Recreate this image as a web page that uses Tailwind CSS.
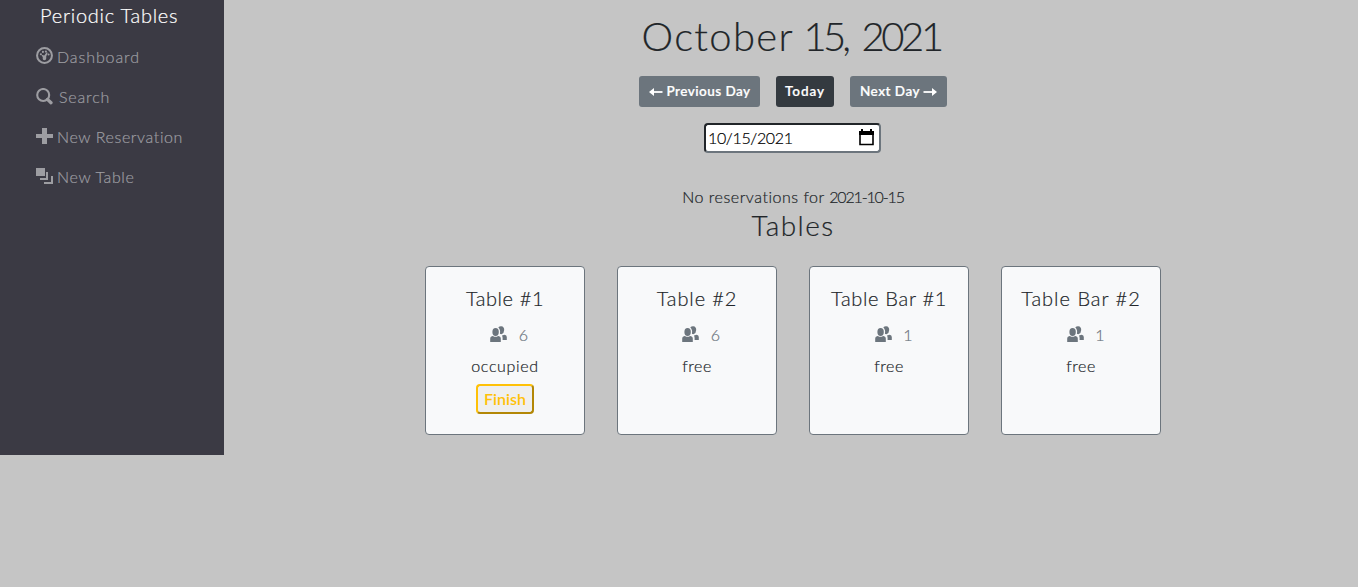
<!DOCTYPE html>
<html lang="en">
<head>
<meta charset="utf-8">
<title>Periodic Tables</title>
<script src="https://cdn.jsdelivr.net/npm/@tailwindcss/browser@4"></script>
</head>
<body class="flex h-[587px] items-start overflow-hidden bg-[#c5c5c5] font-['Lato',sans-serif] text-base font-light text-[#212529] [-webkit-text-stroke:0.2px]">
<svg class="hidden">
  <symbol id="people" viewBox="0 0 17 16">
    <ellipse cx="5.600" cy="6" rx="3.200" ry="4"/>
    <path d="M.2 16v-3.600q0-1.500 1.700-2.100l1-.3q2.600 1.700 5.200 0l1 .3q1.700.5 1.700 2.100V16zM8.300 1.200Q9.700 0 11.300.2q3 .3 2.900 3.900-.1 3-2.400 4-1.300.2-1.900-.4.900-3.800-1.600-6.500zM12 9.600l2.600-.9q2.200.5 2.200 2.300v3h-4.200v-2q0-1.200-.6-2.400z"/>
  </symbol>
</svg>
<nav class="h-[455px] w-56 shrink-0 bg-[#3b3a44] pl-9 text-[#9d9da2]">
  <div class="flex h-[37px] pl-1 text-xl leading-[30px] text-white"><span class="tracking-[0.75px]">Periodic Tables</span></div>
  <a class="flex h-10 items-center gap-1">
    <svg class="mb-[3px] h-[17px] w-[17px]" viewBox="0 0 16 16" fill="currentColor"><circle cx="8" cy="8" r="7" fill="none" stroke="currentColor" stroke-width="1.900"/><circle cx="4.600" cy="6.800" r="1"/><circle cx="6.500" cy="4.600" r="1"/><circle cx="9.300" cy="4.300" r="1"/><circle cx="11.800" cy="7" r="1"/><path d="M5 7.200l2.800.8 2.200-3 1 .5-1.400 3.500q.5 3.300-1.700 3.500-2-.2-1.500-2.900z"/></svg>
    <span class="tracking-[0.9px]">Dashboard</span></a>
  <a class="flex h-10 items-center gap-[6px]">
    <svg class="mb-[2px] h-[17px] w-[17px]" viewBox="0 0 17 17" fill="none" stroke="currentColor"><circle cx="7.200" cy="7" r="6" stroke-width="2.100"/><path d="M11.500 11.400l3.500 3.300" stroke-width="3.300" stroke-linecap="round"/></svg>
    <span class="tracking-[0.85px]">Search</span></a>
  <a class="flex h-10 items-center gap-1">
    <svg class="mb-[2px] h-4 w-[17px]" viewBox="0 0 17 16" fill="currentColor"><path d="M6 0h5v6h6v4h-6v6H6v-6H0V6h6z"/></svg>
    <span class="tracking-[0.6px]">New Reservation</span></a>
  <a class="flex h-10 items-center gap-1">
    <svg class="mb-[2px] h-4 w-[17px]" viewBox="0 0 17 16" fill="currentColor"><path d="M0 0h9v8H0zM10 4h2v8H4v-2h6zM15 8h2v8H8v-2h7z"/></svg>
    <span class="tracking-[0.65px]">New Table</span></a>
</nav>
<main class="flex flex-1 flex-col items-center pl-1">
  <h1 class="mt-3 flex h-16 text-[40px] leading-[48px]"><span class="w-[162px] tracking-[1.3px]">October </span><span class="w-[58px] tracking-[-3.8px]">15, </span><span class="w-[83px] tracking-[-3.4px]">2021</span></h1>
  <div class="flex h-[31px] gap-4 text-[13.5px] font-semibold text-white">
    <button class="flex w-[121px] items-center justify-center gap-1 rounded-[3px] bg-[#6c757d]">
      <svg class="h-[10px] w-[14px]" viewBox="0 0 14 10"><path d="M13.500 5H3" stroke="currentColor" stroke-width="1.800"/><path d="M0 5l5-4v8z" fill="currentColor"/></svg><span class="tracking-[0.45px]">Previous Day</span></button>
    <button class="w-[58px] rounded-[3px] bg-[#343a40]"><span class="tracking-[0.9px]">Today</span></button>
    <button class="flex w-[97px] items-center justify-center gap-[3px] rounded-[3px] bg-[#6c757d]"><span class="tracking-[0.5px]">Next Day</span><svg class="h-[10px] w-[14px]" viewBox="0 0 14 10"><path d="M.5 5H11" stroke="currentColor" stroke-width="1.800"/><path d="M14 5L9 1v8z" fill="currentColor"/></svg></button>
  </div>
  <div class="mt-4 mr-px flex h-[30px] w-[177px] items-center justify-between rounded-[4px] border-2 border-t-[#212529] border-l-[#212529] border-r-[#6c757d] border-b-[#6c757d] bg-white pl-[2px] pr-[5px] text-black">
    <span class="tracking-[-0.35px]">10/15/2021</span>
    <svg class="mb-px h-[17px] w-[15px]" viewBox="0 0 15 17"><path d="M1 3h13v12.500H1z" fill="none" stroke="currentColor" stroke-width="1.600"/><path d="M0 2h15v4H0zM2 0h2v3H2zM11 0h2v3h-2z"/></svg>
  </div>
  <p class="mt-8 h-6 leading-6"><span class="tracking-[0.52px]">No reservations for </span><span class="tracking-[-1.15px]">2021-10-15</span></p>
  <h2 class="-mt-px h-9 text-[28px] leading-[34px]"><span class="tracking-[1.4px]">Tables</span></h2>
  <div class="mt-[22px] flex gap-8 text-center leading-6">
    <section class="h-[169px] w-40 rounded-[4px] border border-[#6c757d] bg-[#f8f9fa] pt-[19px]">
      <h3 class="text-xl leading-6"><span class="tracking-[0.6px]">Table #1</span></h3>
      <div class="mt-[13px] flex h-6 items-center justify-center gap-3 pl-2 text-[#6c757d]"><svg class="mb-[2px] h-4 w-[17px]" fill="currentColor"><use href="#people"/></svg><span>6</span></div>
      <p class="mt-[7px]"><span class="tracking-[0.65px]">occupied</span></p>
      <button class="mt-[6px] h-[30px] w-[58px] rounded-[4px] border-2 border-t-[#ffc107] border-l-[#ffc107] border-r-[#b38705] border-b-[#b38705] bg-[#efefef] font-semibold leading-6 text-[#ffc107] [-webkit-text-stroke:0px]"><span>Finish</span></button>
    </section>
    <section class="h-[169px] w-40 rounded-[4px] border border-[#6c757d] bg-[#f8f9fa] pt-[19px]">
      <h3 class="text-xl leading-6"><span class="tracking-[0.9px]">Table #2</span></h3>
      <div class="mt-[13px] flex h-6 items-center justify-center gap-3 pl-2 text-[#6c757d]"><svg class="mb-[2px] h-4 w-[17px]" fill="currentColor"><use href="#people"/></svg><span>6</span></div>
      <p class="mt-[7px]"><span class="tracking-[0.6px]">free</span></p>
    </section>
    <section class="h-[169px] w-40 rounded-[4px] border border-[#6c757d] bg-[#f8f9fa] pt-[19px]">
      <h3 class="text-xl leading-6"><span class="tracking-[0.7px]">Table Bar #1</span></h3>
      <div class="mt-[13px] flex h-6 items-center justify-center gap-3 pl-[10px] text-[#6c757d]"><svg class="mb-[2px] h-4 w-[17px]" fill="currentColor"><use href="#people"/></svg><span class="-ml-px">1</span></div>
      <p class="mt-[7px]"><span class="tracking-[0.6px]">free</span></p>
    </section>
    <section class="h-[169px] w-40 rounded-[4px] border border-[#6c757d] bg-[#f8f9fa] pt-[19px]">
      <h3 class="text-xl leading-6"><span class="tracking-[1px]">Table Bar #2</span></h3>
      <div class="mt-[13px] flex h-6 items-center justify-center gap-3 pl-[10px] text-[#6c757d]"><svg class="mb-[2px] h-4 w-[17px]" fill="currentColor"><use href="#people"/></svg><span class="-ml-px">1</span></div>
      <p class="mt-[7px]"><span class="tracking-[0.6px]">free</span></p>
    </section>
  </div>
</main>
</body>
</html>
